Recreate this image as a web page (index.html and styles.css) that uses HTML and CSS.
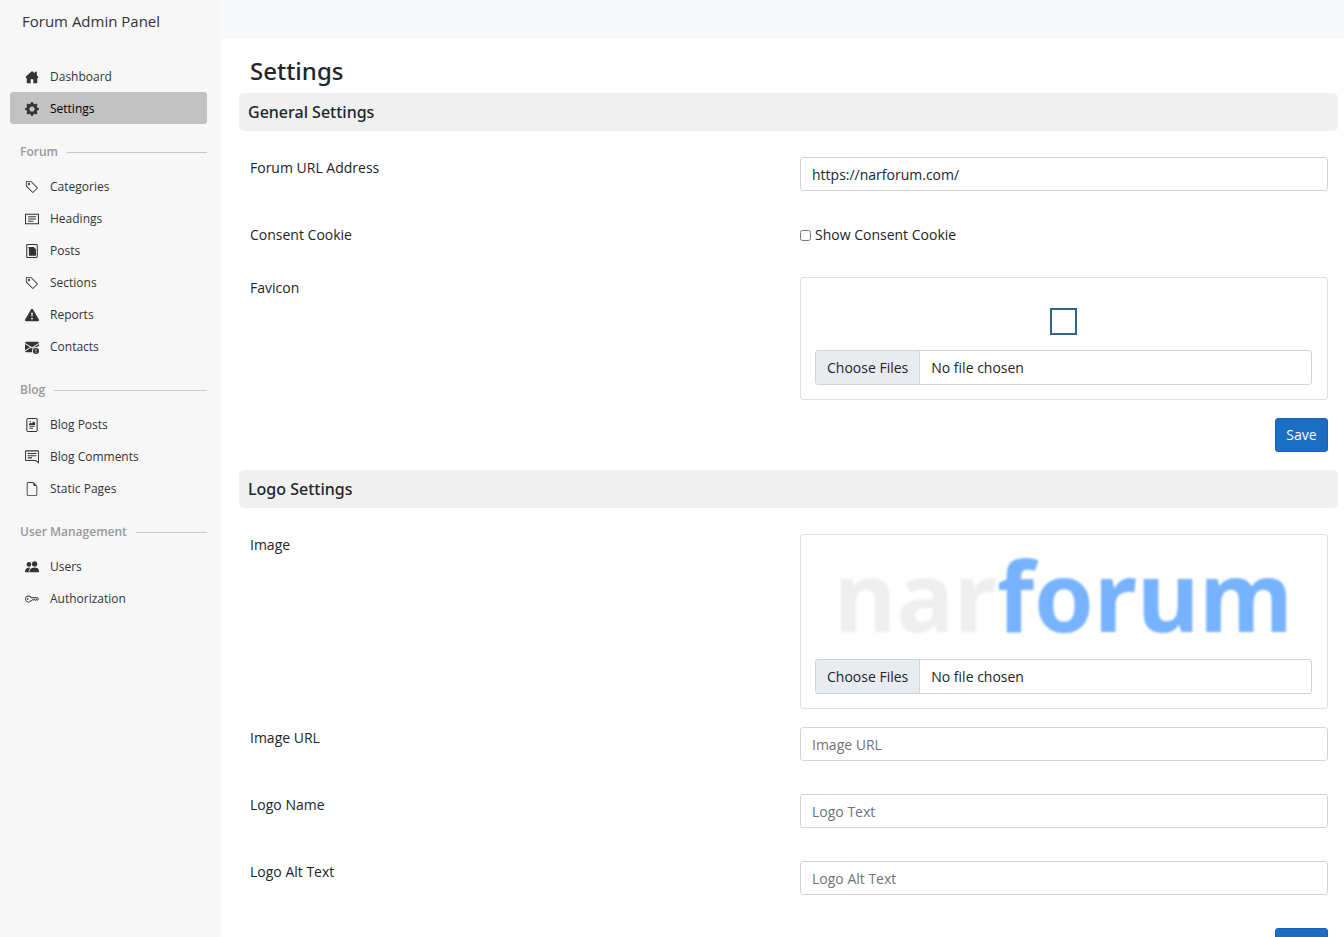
FILE: index.html
```html
<!DOCTYPE html>
<html lang="en">
<head>
<meta charset="utf-8">
<title>Settings - Forum Admin Panel</title>
<link rel="stylesheet" href="styles.css">
</head>
<body>
<div class="app">
  <aside class="sidebar">
    <div class="brand">Forum Admin Panel</div>
    <nav class="menu">
      <a class="item" href="#"><svg class="icon" viewBox="0 0 16 16"><path d="M8 1 1 7.500V9h1v6h4.500v-4.500h3V15H14V9h1V7.500L13.500 6V2H11v1.700z"/></svg>Dashboard</a>
      <a class="item active" href="#"><svg class="icon" viewBox="0 0 16 16"><path d="M9.405 1.050c-.413-1.400-2.397-1.400-2.810 0l-.1.340a1.464 1.464 0 0 1-2.105.872l-.310-.170c-1.283-.698-2.686.705-1.987 1.987l.169.311c.446.820.023 1.841-.872 2.105l-.340.100c-1.400.413-1.400 2.397 0 2.810l.340.100a1.464 1.464 0 0 1 .872 2.105l-.170.310c-.698 1.283.705 2.686 1.987 1.987l.311-.169a1.464 1.464 0 0 1 2.105.872l.100.340c.413 1.400 2.397 1.400 2.810 0l.100-.340a1.464 1.464 0 0 1 2.105-.872l.310.170c1.283.698 2.686-.705 1.987-1.987l-.169-.311a1.464 1.464 0 0 1 .872-2.105l.340-.100c1.400-.413 1.400-2.397 0-2.810l-.340-.100a1.464 1.464 0 0 1-.872-2.105l.170-.310c.698-1.283-.705-2.686-1.987-1.987l-.311.169a1.464 1.464 0 0 1-2.105-.872zM8 10.930a2.929 2.929 0 1 1 0-5.860 2.929 2.929 0 0 1 0 5.858z"/></svg>Settings</a>
      <h2 class="group">Forum</h2>
      <a class="item" href="#"><svg class="icon" viewBox="0 0 16 16"><path d="M6 4.500a1.500 1.500 0 1 1-3 0 1.500 1.500 0 0 1 3 0m-1 0a.5.5 0 1 0-1 0 .5.5 0 0 0 1 0"/><path d="M2 1h4.586a1 1 0 0 1 .707.293l7 7a1 1 0 0 1 0 1.414l-4.586 4.586a1 1 0 0 1-1.414 0l-7-7A1 1 0 0 1 1 6.586V2a1 1 0 0 1 1-1m0 5.586 7 7L13.586 9l-7-7H2z"/></svg>Categories</a>
      <a class="item" href="#"><svg class="icon" viewBox="0 0 16 16"><path class="line" d="M.6 2.600h14.800v10.800H.6zM3.500 5.500h9M3.500 8h9M3.500 10.500h6"/></svg>Headings</a>
      <a class="item" href="#"><svg class="icon" viewBox="0 0 16 16"><path class="line" d="M3 .600h10q1 0 1 1v12.800q0 1-1 1H3q-1 0-1-1V1.600q0-1 1-1z"/><path d="M4 3.500h6L12.500 6v7.500H4.500V5H4z"/></svg>Posts</a>
      <a class="item" href="#"><svg class="icon" viewBox="0 0 16 16"><path d="M6 4.500a1.500 1.500 0 1 1-3 0 1.500 1.500 0 0 1 3 0m-1 0a.5.5 0 1 0-1 0 .5.5 0 0 0 1 0"/><path d="M2 1h4.586a1 1 0 0 1 .707.293l7 7a1 1 0 0 1 0 1.414l-4.586 4.586a1 1 0 0 1-1.414 0l-7-7A1 1 0 0 1 1 6.586V2a1 1 0 0 1 1-1m0 5.586 7 7L13.586 9l-7-7H2z"/></svg>Sections</a>
      <a class="item" href="#"><svg class="icon" viewBox="0 0 16 16"><path d="M8.982 1.566a1.130 1.130 0 0 0-1.960 0L.165 13.233c-.457.778.091 1.767.980 1.767h13.713c.889 0 1.438-.990.980-1.767zM8 5c.535 0 .954.462.900.995l-.350 3.507a.552.552 0 0 1-1.100 0L7.100 5.995A.905.905 0 0 1 8 5m.002 6a1 1 0 1 1 0 2 1 1 0 0 1 0-2"/></svg>Reports</a>
      <a class="item" href="#"><svg class="icon" viewBox="0 0 16 16"><path d="M.05 3.555A2 2 0 0 1 2 2h12a2 2 0 0 1 1.950 1.555L8 8.414zM0 4.697v7.104l5.803-3.558zM6.761 8.830l-6.570 4.026A2 2 0 0 0 2 14h6.256A4.500 4.500 0 0 1 11.500 8q.800 0 1.500.220l3-1.700V4.697L8 9.586z"/><path d="M12.500 9a3.500 3.500 0 1 1 0 7 3.500 3.500 0 0 1 0-7m-.500 1.500v2.300h1v-2.300zm0 3v1h1v-1z"/></svg>Contacts</a>
      <h2 class="group">Blog</h2>
      <a class="item" href="#"><svg class="icon" viewBox="0 0 16 16"><path class="line" d="M3.500.600h9q1.400 0 1.400 1.400v12q0 1.400-1.400 1.400h-9Q2.100 15.400 2.100 14V2Q2.100.600 3.500.600zM5 9.500h6M5 11.800h4"/><path d="M4.500 8V6.500l2-1 1.500.8L9.500 4l2 1.200V8z"/><circle cx="6" cy="4" r=".8"/></svg>Blog Posts</a>
      <a class="item" href="#"><svg class="icon" viewBox="0 0 16 16"><path class="line" d="M1.500 1h13q1 0 1 1v12.500L12.300 12H1.500q-1 0-1-1V2q0-1 1-1zM3 4h10M3 6.500h10M3 9h5"/></svg>Blog Comments</a>
      <a class="item" href="#"><svg class="icon" viewBox="0 0 16 16"><path d="M14 4.500V14a2 2 0 0 1-2 2H4a2 2 0 0 1-2-2V2a2 2 0 0 1 2-2h5.500zm-3 0A1.500 1.500 0 0 1 9.500 3V1H4a1 1 0 0 0-1 1v12a1 1 0 0 0 1 1h8a1 1 0 0 0 1-1V4.500z"/></svg>Static Pages</a>
      <h2 class="group">User Management</h2>
      <a class="item" href="#"><svg class="icon" viewBox="0 0 16 16"><circle cx="4.500" cy="5" r="2.600"/><circle cx="11" cy="4.500" r="3"/><path d="M6 14s-1 0-1-1 1-4.500 6-4.500 5 3.500 5 4.500-1 1-1 1zM5.200 14A2 2 0 0 1 4.200 13c0-1.400.6-2.900 1.800-4L5 8.500c-4 0-5 3.500-5 4.500s1 1 1 1z"/></svg>Users</a>
      <a class="item" href="#"><svg class="icon" viewBox="0 0 16 16"><path d="M0 8a4 4 0 0 1 7.465-2H14a.5.5 0 0 1 .354.146l1.500 1.500a.5.5 0 0 1 0 .708l-1.500 1.500a.5.5 0 0 1-.708 0L13 9.207l-.646.647a.5.5 0 0 1-.708 0L11 9.207l-.646.647a.5.5 0 0 1-.708 0L9 9.207l-.646.647A.5.5 0 0 1 8 10h-.535A4 4 0 0 1 0 8m4-3a3 3 0 1 0 2.712 4.285A.5.5 0 0 1 7.163 9h.630l.853-.854a.5.5 0 0 1 .708 0l.646.647.646-.647a.5.5 0 0 1 .708 0l.646.647.646-.647a.5.5 0 0 1 .708 0l.646.647.793-.793-1-1h-6.630a.5.5 0 0 1-.451-.285A3 3 0 0 0 4 5"/><circle cx="3" cy="8" r="1"/></svg>Authorization</a>
    </nav>
  </aside>
  <div class="page">
    <header class="topbar"></header>
    <main class="content">
      <h1 class="title">Settings</h1>

      <form class="panel">
        <h2 class="section">General Settings</h2>
        <div class="fields">
          <div class="row">
            <label for="url">Forum URL Address</label>
            <input class="control" id="url" type="text" value="https://narforum.com/">
          </div>
          <div class="row row-check">
            <span>Consent Cookie</span>
            <label class="check"><input type="checkbox">Show Consent Cookie</label>
          </div>
          <div class="row row-card">
            <label for="favicon">Favicon</label>
            <div class="card">
              <div class="favicon"><svg class="favicon-image" viewBox="0 0 27 27"><rect x="1" y="1" width="25" height="25"/></svg></div>
              <input class="control file" id="favicon" type="file" multiple>
            </div>
          </div>
          <button class="save" type="button">Save</button>
        </div>
      </form>

      <form class="panel">
        <h2 class="section">Logo Settings</h2>
        <div class="fields">
          <div class="row row-card">
            <label for="image">Image</label>
            <div class="card">
              <div class="logo"><span class="logo-nar">nar</span><span class="logo-forum">forum</span></div>
              <input class="control file" id="image" type="file" multiple>
            </div>
          </div>
          <div class="row">
            <label for="image-url">Image URL</label>
            <input class="control" id="image-url" type="text" placeholder="Image URL">
          </div>
          <div class="row">
            <label for="logo-name">Logo Name</label>
            <input class="control" id="logo-name" type="text" placeholder="Logo Text">
          </div>
          <div class="row">
            <label for="logo-alt">Logo Alt Text</label>
            <input class="control" id="logo-alt" type="text" placeholder="Logo Alt Text">
          </div>
          <button class="save" type="button" aria-label="Save logo settings"></button>
        </div>
      </form>
    </main>
  </div>
</div>
</body>
</html>
```
FILE: styles.css
```css
* { box-sizing: border-box; }

body {
  margin: 0;
  height: 100vh;
  overflow: hidden;
  background: #fff;
  color: #212529;
  font: 14px/22px "Segoe UI", "Open Sans", sans-serif;
}

h1, h2 { margin: 0; }

.app { display: flex; height: 100%; }

/* Sidebar */
.sidebar {
  flex: 0 0 221px;
  padding: 10px 14px 0 10px;
  background: #f7f7f7;
}
.brand {
  padding-left: 12px;
  margin-bottom: 28px;
  font-size: 15px;
  color: #333;
}
.item {
  display: flex;
  align-items: center;
  gap: 11px;
  height: 32px;
  padding: 2px 15px 0;
  border-radius: 3px;
  font-size: 12px;
  color: #333;
  text-decoration: none;
}
.item.active { background: #c2c2c2; color: #000; }
.icon { width: 14px; height: 14px; fill: #333; }
.line { fill: none; stroke: #333; stroke-width: 1.2; }
.group {
  display: flex;
  align-items: center;
  gap: 9px;
  margin: 18px 0 8px;
  padding-left: 10px;
  font-size: 12px;
  line-height: 20px;
  font-weight: 600;
  color: #999;
}
.group::after { content: ""; flex: 1; height: 1px; background: #c8c8c8; }

/* Page */
.page { flex: 1; min-width: 0; overflow: hidden; }
.topbar { height: 39px; background: #f8f9fb; }
.content { padding: 16px 6px 0 18px; }
.title {
  padding-left: 11px;
  margin-bottom: 6px;
  font-family: "Segoe UI", "Noto Sans", sans-serif;
  font-size: 24px;
  line-height: 32px;
  font-weight: 500;
}
.section {
  padding: 8px 9px;
  border-radius: 5px;
  background: #f0f0f0;
  font-family: "Segoe UI", "Noto Sans", sans-serif;
  font-size: 16px;
  font-weight: 500;
}
.panel { margin-bottom: 18px; }
.fields { padding: 26px 10px 0 11px; }
.row {
  display: grid;
  grid-template-columns: 1fr 1fr;
  column-gap: 22px;
  align-items: start;
  margin-bottom: 33px;
}
.row-check { margin-bottom: 31px; }
.row-card { margin-bottom: 18px; }

.control {
  display: block;
  width: 100%;
  height: 34px;
  padding: 5px 11px;
  border: 1px solid #ced4da;
  border-radius: 3px;
  background: #fff;
  color: #212529;
  font: inherit;
}
.control::placeholder { color: #6c757d; opacity: 1; }
.check { display: flex; align-items: center; gap: 4px; }
.check input { width: 11px; height: 11px; margin: 0; }

.card {
  padding: 14px 15px 14px 14px;
  border: 1px solid #dfdfdf;
  border-radius: 3px;
}
.control.file { height: 35px; overflow: hidden; }
.file::file-selector-button {
  height: 35px;
  margin: -6px 11px -6px -11px;
  padding: 0 11px;
  border: 0;
  border-right: 1px solid #ced4da;
  background: #e9ecef;
  color: #212529;
  font: inherit;
}
.favicon { display: flex; justify-content: center; padding: 16px 0 15px; }
.favicon-image { width: 27px; height: 27px; fill: none; stroke: #2f6387; stroke-width: 2; }
.logo {
  margin-bottom: 18px;
  font-family: "Segoe UI", "Noto Sans", sans-serif;
  font-size: 96px;
  line-height: 92px;
  font-weight: 700;
  text-align: center;
  filter: blur(1px);
}
.logo-nar { color: #eee; }
.logo-forum { color: #77b2ff; }

.save {
  display: block;
  min-width: 53px;
  height: 34px;
  margin-left: auto;
  padding: 0 10px;
  border: 1px solid #1863b8;
  border-radius: 3px;
  background: #1b6ec2;
  color: #fff;
  font: inherit;
}
```
